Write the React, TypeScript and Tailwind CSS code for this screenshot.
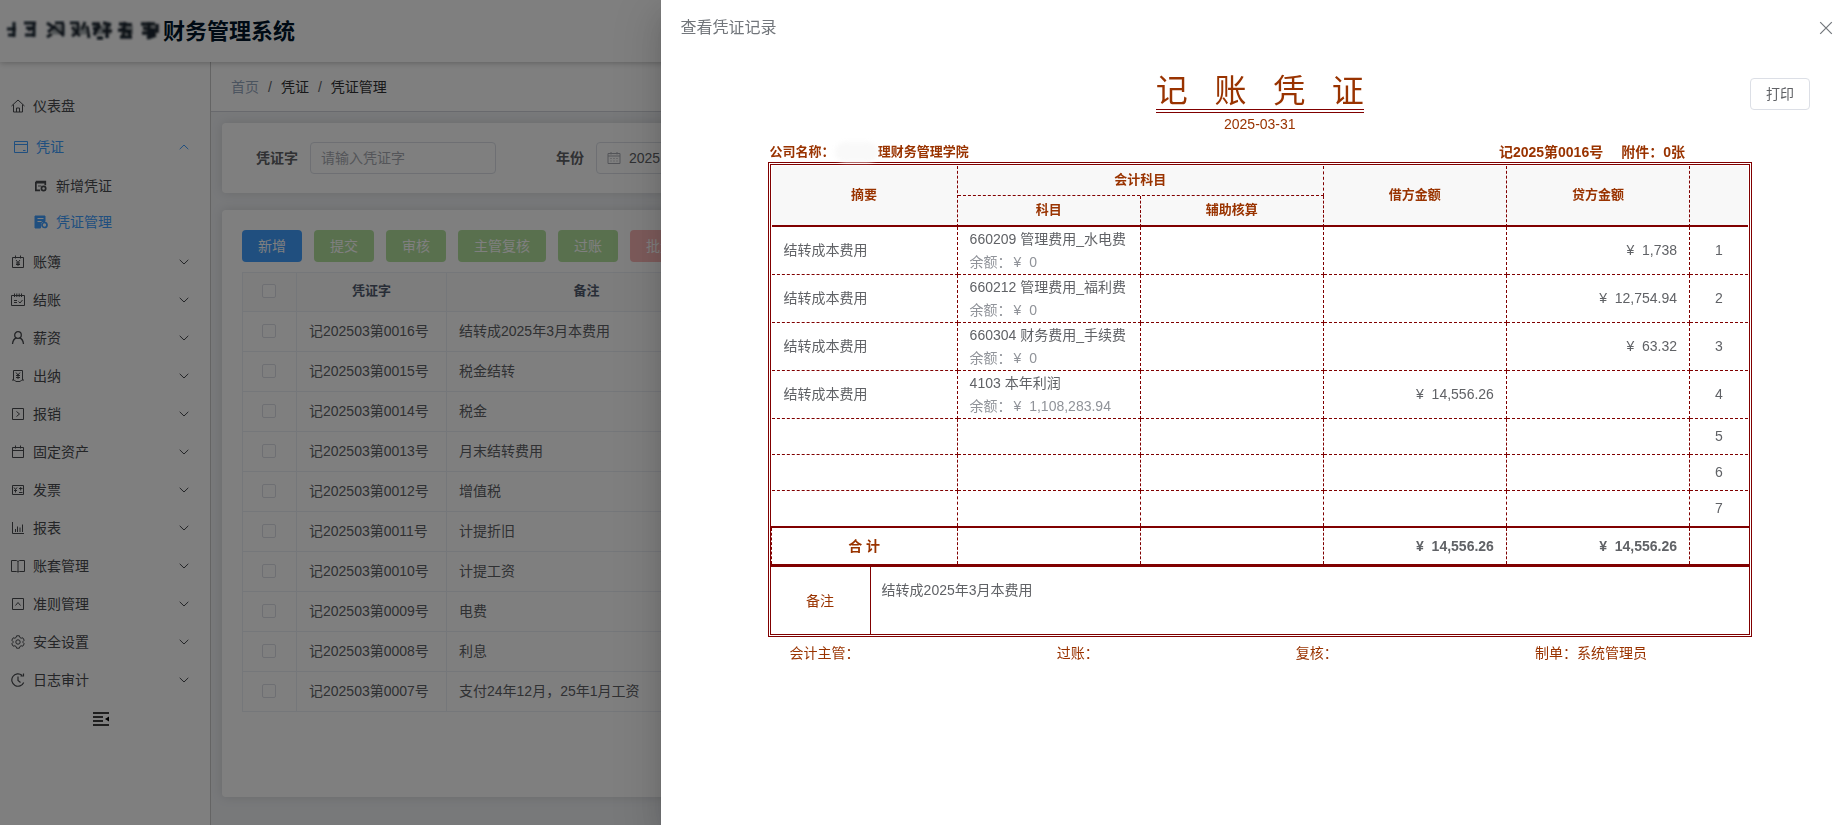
import type { ReactNode } from 'react'

type MenuItem = { label: string; icon: ReactNode }

type Entry = {
  summary?: string
  subject?: string
  balance?: string
  debit?: string
  credit?: string
}

function Icon({ children, className = 'size-[14px]' }: { children: ReactNode; className?: string }) {
  return (
    <svg viewBox="0 0 14 14" fill="none" stroke="currentColor" strokeWidth="1" className={`shrink-0 ${className}`} aria-hidden="true">
      {children}
    </svg>
  )
}

function Chevron({ up = false }: { up?: boolean }) {
  return (
    <svg viewBox="0 0 10 6" fill="none" stroke="currentColor" className="ml-auto w-[10px] h-[6px]" aria-hidden="true">
      <path d={up ? 'M0.7 5.2 5 1l4.300 4.200' : 'M0.7 0.800 5 5l4.300-4.200'} />
    </svg>
  )
}

const menus: MenuItem[] = [
  { label: '账簿', icon: <Icon><path d="M1.500 2.500h11v10h-11zM4.500 0.500v3M9.500 0.500v3M5 5l2 2.500L9 5M7 7.500V11M5 8h4M5 9.500h4" /></Icon> },
  { label: '结账', icon: <Icon><path d="M0.500 2.500h13v10h-13zM3.500 0.500v3.500M5.800 0.500v3.500M8.200 0.500v3.500M10.500 0.500v3.500M3 7.500h3M3 9.500h3M7.500 8.500l1.500 1.500 2.500-3" /></Icon> },
  { label: '薪资', icon: <Icon><circle cx="7" cy="4" r="3.300" strokeWidth="1.300" /><path d="M1.500 13c.4-3.500 2-5.500 4-6M12.500 13c-.4-3.500-2-5.500-4-6" strokeWidth="1.300" /></Icon> },
  { label: '出纳', icon: <Icon><path d="M2.500 11V1.500h9V11M1 11c2 0 3 .5 4 1.500h4c1-1 2-1.500 4-1.500M5 3.500l2 2.500 2-2.500M7 6v4M5 6.500h4M5 8.500h4" /></Icon> },
  { label: '报销', icon: <Icon><path d="M1.500 1.500h11v11h-11zM5.500 4.500 8.500 7l-3 2.500" /></Icon> },
  { label: '固定资产', icon: <Icon><path d="M1.500 2.500h11v10h-11zM1.500 5.500h11M4.500 0.500v3M9.500 0.500v3" /></Icon> },
  { label: '发票', icon: <Icon><path d="M1.500 2.500h11v9h-11zM3 4.500l1.500 2L6 4.500M4.500 6.500v3M3 7.500h3M8 5.500h3.500M9.700 4v3.500M8 9.500h3.500" /></Icon> },
  { label: '报表', icon: <Icon><path d="M1.500 1v11.500H13M4.500 11V8M6.500 11V5.500M9 11V6.500M11.500 11V3.500" /></Icon> },
  { label: '账套管理', icon: <Icon><path d="M0.500 1.500H5.500L7 2.500l1.500-1H13.500v11H8.500L7 13l-1.500-.5H0.500zM7 2.500V13" /></Icon> },
  { label: '准则管理', icon: <Icon><path d="M1.500 1.500h11v11h-11zM4.500 8.500 7 5.500l2.500 3" /></Icon> },
  { label: '安全设置', icon: <Icon><path d="M5.600.8h2.800l.5 1.700 1.200.7 1.700-.4 1.400 2.400-1.200 1.300v1l1.200 1.300-1.400 2.400-1.700-.4-1.200.7-.5 1.700H5.600l-.5-1.700-1.200-.7-1.700.4L.8 8.800 2 7.500v-1L.8 5.200l1.400-2.400 1.700.4 1.200-.7z" /><circle cx="7" cy="7" r="2.200" /></Icon> },
  { label: '日志审计', icon: <Icon><path d="M12.700 9.500A6.200 6.200 0 1 1 11 2.300M9.500 3h3V.500M7 3.500V7.500L9.500 9.500" strokeWidth="1.200" /></Icon> },
]

const vouchers = [
  ['记202503第0016号', '结转成2025年3月本费用'],
  ['记202503第0015号', '税金结转'],
  ['记202503第0014号', '税金'],
  ['记202503第0013号', '月末结转费用'],
  ['记202503第0012号', '增值税'],
  ['记202503第0011号', '计提折旧'],
  ['记202503第0010号', '计提工资'],
  ['记202503第0009号', '电费'],
  ['记202503第0008号', '利息'],
  ['记202503第0007号', '支付24年12月，25年1月工资'],
]

const entries: Entry[] = [
  { summary: '结转成本费用', subject: '660209 管理费用_水电费', balance: '0', credit: '1,738' },
  { summary: '结转成本费用', subject: '660212 管理费用_福利费', balance: '0', credit: '12,754.94' },
  { summary: '结转成本费用', subject: '660304 财务费用_手续费', balance: '0', credit: '63.32' },
  { summary: '结转成本费用', subject: '4103 本年利润', balance: '1,108,283.94', debit: '14,556.26' },
  {},
  {},
  {},
]

const money = (value?: string) => (value ? `¥\u00a0\u00a0${value}` : '')

function Header() {
  return (
    <header className="relative z-10 flex h-[62px] shrink-0 items-center bg-white pl-[5px] shadow-[0_1px_6px_rgba(0,0,0,0.25)]">
      <svg viewBox="0 0 158 26" className="h-[26px] w-[158px]" fill="none" stroke="#1b2630" aria-hidden="true">
        <defs>
          <filter id="smudge">
            <feGaussianBlur stdDeviation="0.9" />
          </filter>
        </defs>
        <g filter="url(#smudge)">
          <g stroke="#a9b0b4" strokeWidth="9">
            <path d="M47 12h12M67 12h16M90 12h16M116 12h12M139 12h13" />
          </g>
          <g strokeWidth="3">
            <path d="M2 11h9M9 4v15M3 17h7" />
            <path d="M19 5h12M21 10h9M29 6v13M20 17h10M23 12l7-3" />
            <path d="M42 5l6 4M50 5h9M43 14l8-6M49 9l10 9M58 6v10M42 19l5-3" />
            <path d="M65 5h9M67 9l8 9M73 5v9M80 4l-3 8M82 8l2 12M67 18l6-4" />
          </g>
          <g strokeWidth="3.600">
            <path d="M87 6h8M98 5l8 2M88 11l8-2M95 7l-6 10M97 13h10M102 8v12M92 20h6" />
            <path d="M114 6l13 1M120 4l-2 16M113 12l14 1M115 19h12M117 9l9 8" />
            <path d="M136 6h14M138 10l12 2M144 4v17M137 15h14M142 20l9-3M152 6v9" />
          </g>
        </g>
      </svg>
      <h1 className="text-[22px] font-bold text-[#001529]">财务管理系统</h1>
    </header>
  )
}

function Sidebar() {
  return (
    <aside className="w-[211px] shrink-0 border-r border-[#c8c8c8] bg-white pt-6 text-sm text-[#484a4e]">
      <nav>
        <a href="#dashboard" className="flex h-10 items-center gap-2 px-[11px]">
          <Icon><path d="M0.500 7 7 1l6.500 6M2.500 5.500v7.500h9V5.500M5.500 13V9h3v4" /></Icon>
          仪表盘
        </a>
        <a href="#voucher" className="flex h-[42px] items-center gap-2 pl-[14px] pr-[21px] text-[#409eff]">
          <Icon><path d="M0.500 1.500h13v11h-13zM0.500 4.500h13M9 10.500h2.500" /></Icon>
          凭证
          <Chevron up />
        </a>
        <a href="#voucher-new" className="flex h-9 items-center gap-[9px] pl-[35px]">
          <Icon className="size-3">
            <path d="M1 2h11v4M1 2v10h5M1 3h11" strokeWidth="2" />
            <path d="M3.500 7h4" />
            <circle cx="10" cy="10" r="2.500" strokeWidth="2" />
          </Icon>
          新增凭证
        </a>
        <a href="#voucher-manage" className="flex h-9 items-center gap-2 pl-[34px] text-[#409eff]">
          <Icon>
            <path d="M1 1h10v5.500H8L6.500 9v4H1z" fill="currentColor" />
            <path d="M3.500 3.500h6M3.500 6.500h4" stroke="#ffffff" />
            <circle cx="10.500" cy="10" r="2.500" strokeWidth="1.700" />
          </Icon>
          凭证管理
        </a>
        <div className="pt-[3px]">
          {menus.map((m) => (
            <a key={m.label} href={`#${m.label}`} className="flex h-[38px] items-center gap-2 pl-[11px] pr-[21px]">
              {m.icon}
              {m.label}
              <Chevron />
            </a>
          ))}
        </div>
      </nav>
      <button type="button" aria-label="收起菜单" className="ml-[93px] mt-[13px] block text-black">
        <svg viewBox="0 0 16 14" className="h-[14px] w-4" fill="none" stroke="currentColor" strokeWidth="1.600">
          <path d="M0 1h16M0 5h10M0 9h10M0 13h16" />
          <path d="M16 4.500v5L12 7z" fill="currentColor" stroke="none" />
        </svg>
      </button>
    </aside>
  )
}

function Checkbox({ label }: { label: string }) {
  return (
    <input
      type="checkbox"
      aria-label={label}
      className="block mx-auto size-[14px] appearance-none rounded-xs border border-[#dcdfe6] bg-white"
    />
  )
}

function VoucherList() {
  const green = 'h-8 rounded px-4 bg-[#b3e19d] text-white'
  const cell = 'border-b border-r border-[#ebeef5] pb-[2px]'
  return (
    <main className="flex min-w-0 flex-1 flex-col bg-[#f0f2f5]">
      {/* Breadcrumb */}
      <nav className="flex h-[50px] shrink-0 items-center gap-[9px] border-b border-[#d0d3da] bg-white pl-5 text-sm text-[#303133]">
        <a href="#home" className="text-[#97a8be]">首页</a>
        <span className="text-[#606266]">/</span>
        <span>凭证</span>
        <span className="text-[#606266]">/</span>
        <span>凭证管理</span>
      </nav>

      {/* Search form */}
      <form className="mx-[11px] mt-[11px] flex h-[70px] shrink-0 items-center gap-8 rounded bg-white px-5 text-sm shadow-[0_0_12px_rgba(0,0,0,0.12)]">
        <div className="flex items-center">
          <label htmlFor="word" className="w-[68px] pr-3 text-right font-bold text-[#606266]">凭证字</label>
          <input id="word" placeholder="请输入凭证字" className="h-8 w-[186px] rounded border border-[#dcdfe6] px-[10px] placeholder:text-[#a8abb2]" />
        </div>
        <div className="flex items-center">
          <label htmlFor="year" className="w-[68px] pr-3 text-right font-bold text-[#606266]">年份</label>
          <div className="flex h-8 w-[186px] items-center gap-2 rounded border border-[#dcdfe6] px-[10px] text-[#a8abb2]">
            <Icon><path d="M1 2.500h12v10H1zM1 5h12M4 1v2.500M10 1v2.500M3.500 7.500h1M6.500 7.500h1M9.500 7.500h1M3.500 10h1M6.500 10h1M9.500 10h1" /></Icon>
            <input id="year" defaultValue="2025" className="w-full text-[#606266]" />
          </div>
        </div>
      </form>

      {/* Voucher table */}
      <section className="mx-[11px] mb-7 mt-[17px] flex-1 rounded bg-white p-5 text-sm shadow-[0_0_12px_rgba(0,0,0,0.12)]">
        <div className="mb-[10px] flex gap-3">
          <button type="button" className="h-8 rounded bg-[#409eff] px-4 text-white">新增</button>
          <button type="button" className={green}>提交</button>
          <button type="button" className={green}>审核</button>
          <button type="button" className={green}>主管复核</button>
          <button type="button" className={green}>过账</button>
          <button type="button" className="h-8 rounded bg-[#fab6b6] px-4 text-white">批量删除</button>
        </div>
        <table className="w-full table-fixed border-separate border-spacing-0 border-l border-t border-[#ebeef5] text-[#606266]">
          <colgroup>
            <col className="w-[54px]" />
            <col className="w-[150px]" />
            <col className="w-[280px]" />
            <col />
          </colgroup>
          <thead>
            <tr className="h-[39px] bg-[#fafafa] text-[13px] text-[#515a6e]">
              <th className={`${cell} pr-[2px]`}><Checkbox label="全选" /></th>
              <th className={cell}>凭证字</th>
              <th className={cell}>备注</th>
              <th className={cell}></th>
            </tr>
          </thead>
          <tbody>
            {vouchers.map(([word, remark]) => (
              <tr key={word} className="h-10">
                <td className={`${cell} pr-[2px]`}><Checkbox label={word} /></td>
                <td className={`${cell} px-3`}>{word}</td>
                <td className={`${cell} px-3`}>{remark}</td>
                <td className={cell}></td>
              </tr>
            ))}
          </tbody>
        </table>
      </section>
    </main>
  )
}

function VoucherSheet() {
  const head = 'border-r border-dashed border-[#800000]'
  const cell = 'border-r border-b border-dashed border-[#800000] px-3'
  return (
    <>
      <div className="border-[3px] border-double border-[#800000] text-sm text-[#606266]">
        <div className="px-px pt-px">
          <table className="w-full table-fixed border-separate border-spacing-0">
            <colgroup>
              <col className="w-[186px]" />
              <col />
              <col />
              <col />
              <col />
              <col className="w-[58px]" />
            </colgroup>
            <thead className="bg-[#f8f8f8] text-[13px] text-[#993300]">
              <tr className="h-[30px]">
                <th rowSpan={2} className={`${head} border-b-2 [border-bottom-style:solid]`}>摘要</th>
                <th colSpan={2} className={`${head} border-b`}>会计科目</th>
                <th rowSpan={2} className={`${head} border-b-2 [border-bottom-style:solid]`}>借方金额</th>
                <th rowSpan={2} className={`${head} border-b-2 [border-bottom-style:solid]`}>贷方金额</th>
                <th rowSpan={2} className="border-b-2 border-[#800000]"></th>
              </tr>
              <tr className="h-[31px]">
                <th className={`${head} border-b-2 [border-bottom-style:solid]`}>科目</th>
                <th className={`${head} border-b-2 [border-bottom-style:solid]`}>辅助核算</th>
              </tr>
            </thead>
            <tbody className="[&>tr:last-child>td]:border-b-0">
              {entries.map((e, i) => (
                <tr key={i} className={e.subject ? 'h-12' : i === entries.length - 1 ? 'h-[35px]' : 'h-9'}>
                  <td className={`${cell} pb-[2px]`}>{e.summary}</td>
                  <td className={`${cell} leading-[23px] whitespace-nowrap`}>
                    {e.subject && (
                      <>
                        <div>{e.subject}</div>
                        <div className="flex gap-[2px] text-[#909399]">
                          <span>余额：</span>
                          <span>{money(e.balance)}</span>
                        </div>
                      </>
                    )}
                  </td>
                  <td className={cell}></td>
                  <td className={`${cell} pb-[2px] text-right`}>{money(e.debit)}</td>
                  <td className={`${cell} pb-[2px] text-right`}>{money(e.credit)}</td>
                  <td className="border-b border-dashed border-[#800000] pb-[2px] text-center">{i + 1}</td>
                </tr>
              ))}
            </tbody>
          </table>
        </div>

        {/* Totals */}
        <div className="border-b-[3px] border-t-2 border-[#800000]">
          <table className="w-full table-fixed border-separate border-spacing-0 font-bold">
            <colgroup>
              <col className="w-[187px]" />
              <col />
              <col />
              <col />
              <col />
              <col className="w-[59px]" />
            </colgroup>
            <tbody>
              <tr className="h-9">
                <td className={`${head} border-l text-center text-[#993300]`}>合 计</td>
                <td className={head}></td>
                <td className={head}></td>
                <td className={`${head} px-3 text-right`}>{money('14,556.26')}</td>
                <td className={`${head} px-3 text-right`}>{money('14,556.26')}</td>
                <td></td>
              </tr>
            </tbody>
          </table>
        </div>

        {/* Remark */}
        <div className="flex h-[67px]">
          <div className="flex w-[100px] items-center justify-center border-r border-[#800000] text-[#993300]">备注</div>
          <p className="px-[11px] py-[13px]">结转成2025年3月本费用</p>
        </div>
      </div>

      <div className="flex justify-between pl-[22px] pr-[105px] pt-[6px] text-sm text-[#993300]">
        <span>会计主管：</span>
        <span>过账：</span>
        <span>复核：</span>
        <span>制单：系统管理员</span>
      </div>
    </>
  )
}

function VoucherDrawer() {
  return (
    <div
      role="dialog"
      aria-label="查看凭证记录"
      className="fixed inset-y-0 right-0 z-30 w-[64%] overflow-y-auto bg-white shadow-[0_16px_48px_16px_rgba(0,0,0,0.08),0_12px_32px_rgba(0,0,0,0.12),0_8px_16px_-8px_rgba(0,0,0,0.16)]"
    >
      <div className="flex h-14 items-center justify-between pl-5 pr-[2px] text-[#72767b]">
        <h2 className="text-base">查看凭证记录</h2>
        <button type="button" aria-label="关闭">
          <svg viewBox="0 0 14 14" className="size-[14px]" fill="none" stroke="currentColor" strokeWidth="1.200">
            <path d="M1.200 1.200l11.600 11.600M12.800 1.200 1.200 12.800" />
          </svg>
        </button>
      </div>

      <div className="ml-[107px] mr-[83px] pt-4">
        <div className="grid grid-cols-[1fr_auto_1fr] items-start">
          <h3 className="col-start-2 border-b-4 border-double border-[#800000] pt-[2px] text-[32px] leading-[35px] text-[#993300]">
            记&nbsp;&nbsp;&nbsp;账&nbsp;&nbsp;&nbsp;凭&nbsp;&nbsp;&nbsp;证
          </h3>
          <button type="button" className="-mr-[58px] mt-[6px] h-8 w-[60px] justify-self-end rounded border border-[#dcdfe6] text-sm text-[#606266]">打印</button>
        </div>
        <p className="mt-px text-center text-sm text-[#993300]">2025-03-31</p>
        <div className="flex h-7 items-end justify-between pl-[2px] pr-[67px] font-bold text-[#993300]">
          <div className="flex items-center text-[13px]">
            公司名称：
            <span className="h-5 w-[43px] rounded-full bg-[#f9f9f9] blur-[2px]"></span>
            理财务管理学院
          </div>
          <div className="flex gap-[18px] text-sm">
            <span>记2025第0016号</span>
            <span>附件：0张</span>
          </div>
        </div>
        <VoucherSheet />
      </div>
    </div>
  )
}

export default function App() {
  return (
    <div className="flex min-h-screen flex-col font-['Liberation_Sans','Noto_Sans_CJK_SC',sans-serif]">
      <Header />
      <div className="flex flex-1">
        <Sidebar />
        <VoucherList />
      </div>
      <div className="fixed inset-0 z-20 bg-black/50"></div>
      <VoucherDrawer />
    </div>
  )
}
